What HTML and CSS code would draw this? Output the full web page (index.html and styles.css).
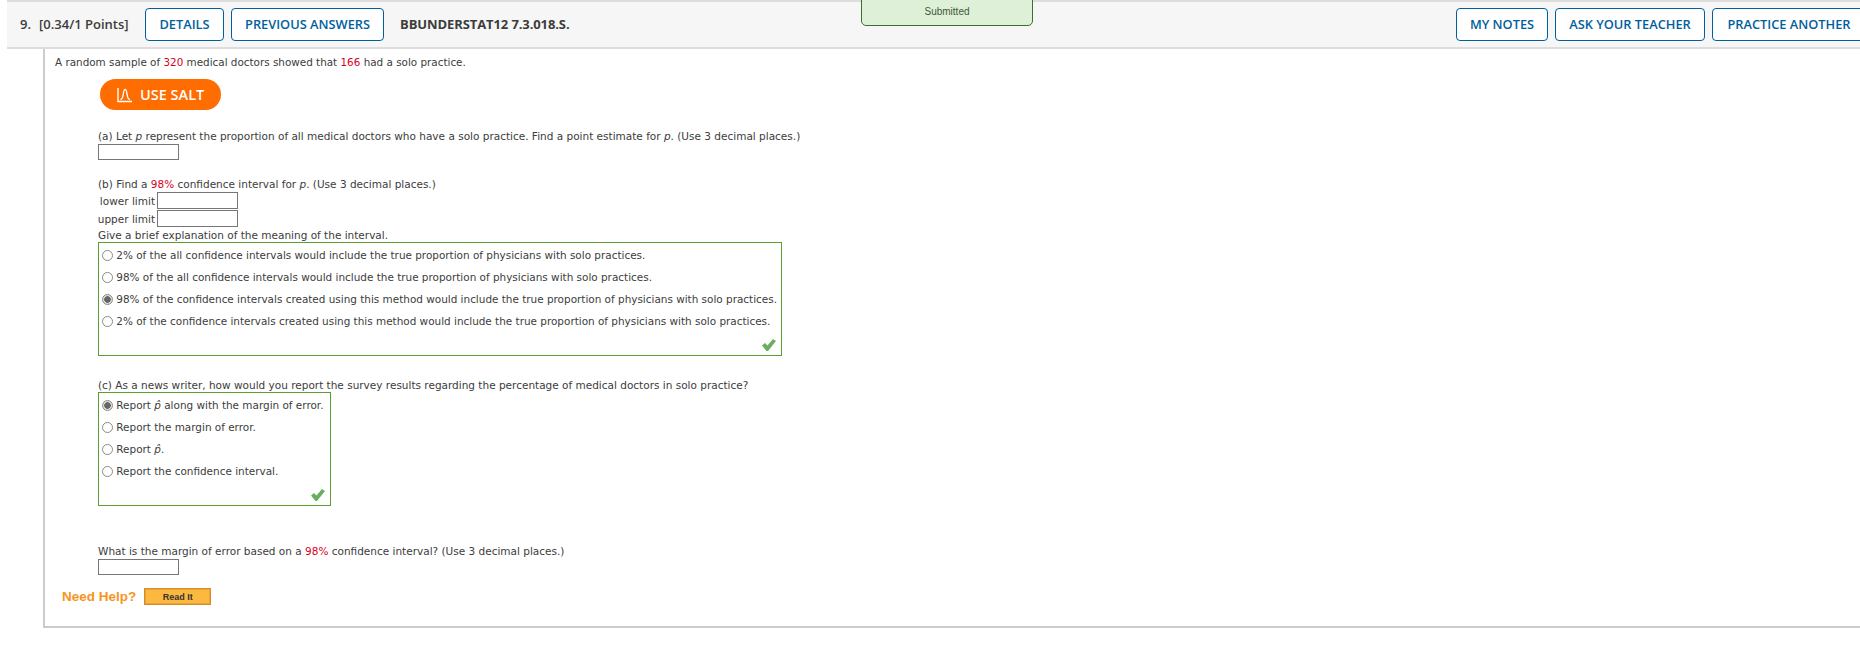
FILE: index.html
```html
<!DOCTYPE html>
<html lang="en">
<head>
    <meta charset="UTF-8">
    <meta name="viewport" content="width=device-width, initial-scale=1.0">
    <title>Question 9</title>
    <link rel="stylesheet" href="styles.css">
</head>
<body>
    <div class="submitted">Submitted</div>

    <header class="q-header">
        <span class="q-number">9.</span>
        <span class="q-points">[0.34/1 Points]</span>
        <a class="btn btn-details">DETAILS</a>
        <a class="btn btn-previous">PREVIOUS ANSWERS</a>
        <span class="q-code">BBUNDERSTAT12 7.3.018.S.</span>
        <div class="q-actions">
            <a class="btn btn-notes">MY NOTES</a>
            <a class="btn btn-teacher">ASK YOUR TEACHER</a>
            <a class="btn btn-practice">PRACTICE ANOTHER</a>
        </div>
    </header>

    <main class="question">
        <p class="line line-intro">A random sample of <span class="num">320</span> medical doctors showed that <span class="num">166</span> had a solo practice.</p>

        <a class="salt">
            <svg class="salt-icon" viewBox="0 0 16 16" width="16" height="16">
                <path d="M1 1v13.500h14M3.500 12.500c2 0 2.300-2 2.700-5 .4-3 .8-5 1.900-5s1.600 2 2 5c.4 3 .8 5 2.800 5" fill="none" stroke="#fff" stroke-width="1.400"/>
            </svg>
            USE SALT
        </a>

        <div class="part part-a">
            <p class="line">(a) Let <i>p</i> represent the proportion of all medical doctors who have a solo practice. Find a point estimate for <i>p</i>. (Use 3 decimal places.)</p>
            <input class="answer" type="text">
        </div>

        <div class="part part-b">
            <p class="line">(b) Find a <span class="num">98%</span> confidence interval for <i>p</i>. (Use 3 decimal places.)</p>
            <div class="limit"><label>lower limit</label><input class="answer" type="text"></div>
            <div class="limit"><label>upper limit</label><input class="answer" type="text"></div>
            <p class="line line-tight">Give a brief explanation of the meaning of the interval.</p>
            <div class="choices choices-wide">
                <label class="choice"><input type="radio" name="b"> 2% of the all confidence intervals would include the true proportion of physicians with solo practices.</label>
                <label class="choice"><input type="radio" name="b"> 98% of the all confidence intervals would include the true proportion of physicians with solo practices.</label>
                <label class="choice"><input type="radio" name="b" checked> 98% of the confidence intervals created using this method would include the true proportion of physicians with solo practices.</label>
                <label class="choice"><input type="radio" name="b"> 2% of the confidence intervals created using this method would include the true proportion of physicians with solo practices.</label>
                <svg class="check" viewBox="0 0 14 12" width="14" height="12"><path d="M0 6.500l3-2.500 2.500 2.500L11 0l3 2-8 10h-1.500z" fill="#6aaf5e"/></svg>
            </div>
        </div>

        <div class="part part-c">
            <p class="line line-tight">(c) As a news writer, how would you report the survey results regarding the percentage of medical doctors in solo practice?</p>
            <div class="choices choices-narrow">
                <label class="choice"><input type="radio" name="c" checked> Report <i>p&#770;</i> along with the margin of error.</label>
                <label class="choice"><input type="radio" name="c"> Report the margin of error.</label>
                <label class="choice"><input type="radio" name="c"> Report <i>p&#770;</i>.</label>
                <label class="choice"><input type="radio" name="c"> Report the confidence interval.</label>
                <svg class="check" viewBox="0 0 14 12" width="14" height="12"><path d="M0 6.500l3-2.500 2.500 2.500L11 0l3 2-8 10h-1.500z" fill="#6aaf5e"/></svg>
            </div>
        </div>

        <div class="part part-d">
            <p class="line">What is the margin of error based on a <span class="num">98%</span> confidence interval? (Use 3 decimal places.)</p>
            <input class="answer" type="text">
        </div>

        <div class="need-help">
            <span class="need-label">Need Help?</span>
            <a class="read-it">Read It</a>
        </div>
    </main>
</body>
</html>
```

FILE: styles.css
```css
html, body {
    margin: 0;
    padding: 0;
    height: 647px;
    overflow: hidden;
    background: #fff;
}
body {
    font-family: "DejaVu Sans", Verdana, sans-serif;
    font-size: 10.5px;
    color: #3c3c3c;
    position: relative;
}
p {
    margin: 0;
}

/* header bar */
.q-header {
    display: flex;
    align-items: center;
    box-sizing: border-box;
    height: 49px;
    margin-left: 7px;
    padding-left: 13px;
    background: #f6f6f6;
    border-top: 2px solid #ddd;
    border-bottom: 2px solid #ddd;
    font-family: "Open Sans", sans-serif;
    font-size: 13px;
    font-weight: 600;
    white-space: nowrap;
}
.q-number {
    width: 19px;
    padding-bottom: 2px;
}
.q-points {
    width: 106px;
    padding-bottom: 2px;
}
.q-code {
    margin-left: 16px;
    padding-bottom: 2px;
    letter-spacing: -0.1px;
    font-weight: 700;
}
.btn {
    display: flex;
    align-items: center;
    justify-content: center;
    box-sizing: border-box;
    height: 33px;
    padding-bottom: 2px;
    border: 1px solid #00609c;
    border-radius: 4px;
    background: #fff;
    color: #00609c;
    font-size: 12.800px;
}
.btn-details {
    width: 79px;
    margin-right: 7px;
}
.btn-previous {
    width: 153px;
}
.q-actions {
    display: flex;
    gap: 7px;
    margin-left: auto;
    margin-right: -6px;
}
.btn-notes {
    width: 92px;
}
.btn-teacher {
    width: 150px;
}
.btn-practice {
    width: 154px;
}

/* green toast over the header */
.submitted {
    position: absolute;
    top: -2px;
    left: 861px;
    box-sizing: border-box;
    width: 172px;
    height: 28px;
    padding-top: 7px;
    background: #dff0d8;
    border: 1px solid #3c6e30;
    border-radius: 0 0 5px 5px;
    text-align: center;
    font-family: "Liberation Sans", sans-serif;
    font-size: 10px;
    color: #3c5a35;
}

/* question body */
.question {
    box-sizing: border-box;
    height: 579px;
    margin-left: 43px;
    padding: 5px 0 0 10px;
    border-left: 2px solid #ccc;
    border-bottom: 2px solid #ccc;
}
.line {
    line-height: 16px;
    white-space: nowrap;
}
.line-intro {
    font-size: 10.400px;
}
.line-tight {
    line-height: 14px;
}
.num {
    color: #d9001b;
}
.salt {
    display: flex;
    align-items: center;
    gap: 7px;
    box-sizing: border-box;
    width: 121px;
    height: 31px;
    margin: 9px 0 0 45px;
    padding-left: 17px;
    background: #ff6c00;
    border-radius: 16px;
    color: #fff;
    font-family: "Open Sans", sans-serif;
    font-size: 14.500px;
    font-weight: 600;
}
.part {
    margin-left: 43px;
}
.part-a {
    margin-top: 18px;
}
.part-b {
    margin-top: 16px;
}
.part-c {
    margin-top: 22px;
}
.part-d {
    margin-top: 37px;
}
.answer {
    display: block;
    box-sizing: border-box;
    width: 81px;
    height: 16px;
    margin: 0;
    padding: 0;
    border: 1px solid #767676;
    background: #fff;
}
.limit {
    display: flex;
    justify-content: flex-end;
    align-items: center;
    width: 140px;
    height: 17px;
    margin-bottom: 1px;
    gap: 2px;
    white-space: nowrap;
}
.limit .answer {
    height: 17px;
}
.part-b .line-tight {
    margin-top: 1px;
}

/* multiple choice boxes */
.choices {
    position: relative;
    box-sizing: border-box;
    height: 114px;
    padding-top: 1px;
    border: 1px solid #5a9e32;
}
.choices-wide {
    width: 684px;
}
.choices-narrow {
    width: 233px;
}
.choice {
    display: flex;
    align-items: center;
    height: 22px;
    font-size: 10.440px;
    white-space: pre;
}
.choice input {
    appearance: none;
    box-sizing: border-box;
    width: 11px;
    height: 11px;
    margin: 0 0 0 3px;
    border: 1px solid #8a8a8a;
    border-radius: 50%;
    background: #fff;
}
.choice input:checked {
    background: radial-gradient(circle, #666 0 3px, #ddd 3.500px);
}
.check {
    position: absolute;
    right: 5px;
    bottom: 4px;
}

/* help row */
.need-help {
    display: flex;
    align-items: center;
    height: 17px;
    margin: 13px 0 0 7px;
    gap: 8px;
}
.need-label {
    font-family: "Liberation Sans", sans-serif;
    font-size: 13.500px;
    font-weight: bold;
    color: #f7941e;
}
.read-it {
    display: flex;
    align-items: center;
    justify-content: center;
    box-sizing: border-box;
    width: 67px;
    height: 17px;
    background: #fdb93f;
    border: 1px solid #d98a2b;
    box-shadow: inset 0 0 0 1px #e8a33a;
    font-family: "Liberation Sans", sans-serif;
    font-size: 9px;
    font-weight: bold;
    color: #333;
}
```
